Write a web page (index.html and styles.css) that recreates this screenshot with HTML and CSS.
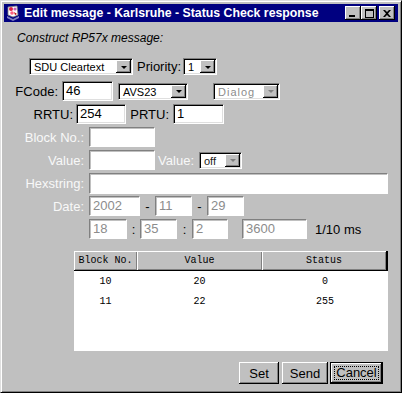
FILE: index.html
```html
<!DOCTYPE html>
<html lang="en">

<head>
    <meta charset="UTF-8">
    <title>Edit message - Karlsruhe - Status Check response</title>
    <link rel="stylesheet" href="styles.css">
</head>

<body>
    <div class="window">
        <div class="titlebar">
            <svg class="app-icon" width="16" height="16" viewBox="0 0 16 16">
                <path d="M2 11 L8 14 L14 11 L14 13 L8 16 L2 13 Z" fill="#8080c0"/>
                <path d="M3 2 L12 1 L13 10 L8 12 L3 10 Z" fill="#ffffff"/>
                <circle cx="6" cy="4" r="2" fill="#e02040"/>
                <circle cx="10" cy="4" r="1.6" fill="#c060c0"/>
                <circle cx="7" cy="8" r="1.8" fill="#ff6080"/>
                <path d="M9 7 L12 9 L10 10 Z" fill="#c00000"/>
                <path d="M3 2 L12 1 L13 10 L8 12 L3 10 Z" fill="none" stroke="#808080" stroke-width="0.8"/>
            </svg>
            <span class="title">Edit message - Karlsruhe - Status Check response</span>
            <div class="title-buttons">
                <span class="tbtn">
                    <svg width="8" height="7" viewBox="0 0 8 7"><rect x="0" y="5" width="6" height="2" fill="#000"/></svg>
                </span>
                <span class="tbtn">
                    <svg width="9" height="9" viewBox="0 0 9 9"><path d="M0 0 H9 V9 H0 Z M1 2 V8 H8 V2 Z" fill="#000" fill-rule="evenodd"/></svg>
                </span>
                <span class="tbtn tbtn-close">
                    <svg width="8" height="7" viewBox="0 0 8 7"><path d="M0 0 H2 L4 2 L6 0 H8 L5 3.5 L8 7 H6 L4 5 L2 7 H0 L3 3.5 Z" fill="#000"/></svg>
                </span>
            </div>
        </div>

        <div class="content">
            <p class="heading">Construct RP57x message:</p>

            <div class="row row-type">
                <div class="combo w-sdu"><span class="combo-text">SDU Cleartext</span><span class="combo-btn"><i class="arrow"></i></span></div>
                <span class="label lbl-priority">Priority:</span>
                <div class="combo w-prio"><span class="combo-text">1</span><span class="combo-btn"><i class="arrow"></i></span></div>
            </div>

            <div class="row row-fcode">
                <span class="label lbl-fcode">FCode:</span>
                <div class="field w-fcode">46</div>
                <div class="combo w-avs"><span class="combo-text">AVS23</span><span class="combo-btn"><i class="arrow"></i></span></div>
                <div class="combo w-dialog disabled"><span class="combo-text">Dialog</span><span class="combo-btn"><i class="arrow"></i></span></div>
            </div>

            <div class="row">
                <span class="label lbl-rrtu">RRTU:</span>
                <div class="field w-rrtu">254</div>
                <span class="label lbl-prtu">PRTU:</span>
                <div class="field w-prtu">1</div>
            </div>

            <div class="row">
                <span class="label lbl-form off">Block No.:</span>
                <div class="field w-block disabled"></div>
            </div>

            <div class="row">
                <span class="label lbl-form off">Value:</span>
                <div class="field w-block disabled"></div>
                <span class="label lbl-value off">Value:</span>
                <div class="combo w-off disabled-btn"><span class="combo-text">off</span><span class="combo-btn"><i class="arrow"></i></span></div>
            </div>

            <div class="row">
                <span class="label lbl-form off">Hexstring:</span>
                <div class="field w-hex disabled"></div>
            </div>

            <div class="row">
                <span class="label lbl-form off">Date:</span>
                <div class="field w-year disabled">2002</div>
                <span class="sep sep-date">-</span>
                <div class="field w-day disabled">11</div>
                <span class="sep sep-date">-</span>
                <div class="field w-day disabled">29</div>
            </div>

            <div class="row">
                <span class="label lbl-form"></span>
                <div class="field w-hour disabled">18</div>
                <span class="sep sep-time1">:</span>
                <div class="field w-day disabled">35</div>
                <span class="sep sep-time2">:</span>
                <div class="field w-sec disabled">2</div>
                <div class="field w-ms disabled">3600</div>
                <span class="label lbl-unit">1/10 ms</span>
            </div>

            <div class="table">
                <div class="thead">
                    <span class="th col-block">Block No.</span>
                    <span class="th col-value">Value</span>
                    <span class="th col-status">Status</span>
                </div>
                <div class="tr">
                    <span class="td col-block">10</span>
                    <span class="td col-value">20</span>
                    <span class="td col-status">0</span>
                </div>
                <div class="tr">
                    <span class="td col-block">11</span>
                    <span class="td col-value">22</span>
                    <span class="td col-status">255</span>
                </div>
            </div>

            <div class="buttons">
                <button class="btn btn-set">Set</button>
                <button class="btn btn-send">Send</button>
                <button class="btn btn-cancel"><span class="focus">Cancel</span></button>
            </div>
        </div>
    </div>
</body>

</html>
```

FILE: styles.css
```css
body {
    margin: 0;
    font-family: "Liberation Sans", Arial, sans-serif;
    font-size: 13px;
    color: #000;
    background: #c0c0c0;
}

.window {
    width: 402px;
    height: 393px;
    box-sizing: border-box;
    background: #c0c0c0;
    border: 1px solid;
    border-color: #dfdfdf #000 #000 #dfdfdf;
    box-shadow: inset 1px 1px #fff, inset -1px -1px #808080;
    padding: 3px;
}

/* title bar */
.titlebar {
    height: 18px;
    background: #000080;
    display: flex;
    align-items: center;
    color: #fff;
}

.app-icon {
    margin-left: 1px;
    flex: none;
}

.title {
    margin-left: 3px;
    font-weight: bold;
    font-size: 12.3px;
    white-space: nowrap;
}

.title-buttons {
    margin-left: auto;
    margin-right: 3px;
    display: flex;
}

.tbtn {
    width: 16px;
    height: 14px;
    box-sizing: border-box;
    background: #c0c0c0;
    box-shadow: inset -1px -1px #000, inset 1px 1px #fff, inset -2px -2px #808080;
    display: flex;
    align-items: center;
    justify-content: center;
    padding-top: 1px;
}

.tbtn-close {
    margin-left: 2px;
}

/* form */
.content {
    display: flex;
    flex-direction: column;
}

.heading {
    margin: 9px 0 0 13px;
    font-size: 12px;
    line-height: 15px;
    font-style: italic;
}

.row {
    display: flex;
    align-items: center;
    height: 20px;
    margin-top: 3px;
}

.row-type {
    height: 17px;
    margin-top: 12px;
    padding-left: 25px;
}

.row-fcode {
    margin-top: 6px;
}

.label {
    white-space: nowrap;
    text-align: right;
    flex: none;
}

.label.off {
    color: #f8f8f8;
}

.lbl-priority { width: 43px; margin: 0 3px 0 4px; }
.lbl-fcode { width: 54px; margin-right: 4px; }
.lbl-rrtu { width: 69px; margin-right: 3px; }
.lbl-prtu { width: 43px; margin-right: 4px; }
.lbl-form { width: 80px; margin-right: 5px; }
.lbl-value { width: 39px; margin-right: 5px; }
.lbl-unit { margin-left: 8px; text-align: left; }

.field {
    height: 20px;
    box-sizing: border-box;
    background: #fff;
    border: 1px solid;
    border-color: #808080 #fff #fff #808080;
    box-shadow: inset 1px 1px #000, inset -1px -1px #dfdfdf;
    padding: 1px 0 0 3px;
    line-height: 16px;
    flex: none;
}

.field.disabled {
    color: #8c8c8c;
    box-shadow: inset 1px 1px #c0c0c0;
}

.w-fcode { width: 51px; }
.w-rrtu { width: 50px; }
.w-prtu { width: 51px; }
.w-block { width: 66px; }
.w-hex { width: 299px; height: 21px; }
.w-year { width: 51px; }
.w-day { width: 37px; }
.w-hour { width: 38px; }
.w-sec { width: 36px; margin-right: 14px; }
.w-ms { width: 65px; }

.sep {
    text-align: center;
    flex: none;
}

.sep-date { width: 15px; }
.sep-time1 { width: 13px; }
.sep-time2 { width: 15px; }

/* combo boxes */
.combo {
    height: 17px;
    box-sizing: border-box;
    background: #fff;
    border: 1px solid;
    border-color: #808080 #fff #fff #808080;
    box-shadow: inset 1px 1px #000, inset -1px -1px #dfdfdf;
    display: flex;
    align-items: stretch;
    padding: 1px;
    font-size: 11px;
    flex: none;
}

.combo-text {
    flex: 1;
    padding-left: 3px;
    line-height: 14px;
    white-space: nowrap;
    overflow: hidden;
}

.combo-btn {
    width: 15px;
    background: #c0c0c0;
    box-shadow: inset -1px -1px #000, inset 1px 1px #fff, inset -2px -2px #808080;
    display: flex;
    align-items: center;
    justify-content: center;
}

.arrow {
    width: 0;
    height: 0;
    border-left: 3px solid transparent;
    border-right: 3px solid transparent;
    border-top: 3px solid #000;
    margin-top: 1px;
}

.combo.disabled .combo-text {
    color: #8c8c8c;
    letter-spacing: 1px;
}

.combo.disabled .arrow,
.combo.disabled-btn .arrow {
    border-top-color: #808080;
}

.combo.disabled-btn .combo-text {
    color: #202020;
}

.w-sdu { width: 104px; }
.w-prio { width: 34px; }
.w-avs { width: 70px; margin-left: 5px; }
.w-dialog { width: 67px; margin-left: 25px; }
.w-off { width: 43px; }

/* table */
.table {
    margin: 12px 0 0 70px;
    width: 314px;
    height: 100px;
    background: #fff;
    font-family: "Liberation Mono", "Courier New", monospace;
    font-size: 10px;
}

.thead {
    display: flex;
    height: 20px;
    background: #c0c0c0;
    border-bottom: 1px solid #000;
    box-sizing: border-box;
}

.th {
    box-sizing: border-box;
    text-align: center;
    line-height: 20px;
    box-shadow: inset 1px 1px #fff, inset -1px -1px #808080;
}

.col-block { width: 63px; }
.col-value { width: 125px; }
.col-status { width: 126px; }

.th.col-status {
    border-right: 2px solid #000;
}

.tr {
    display: flex;
    height: 20px;
}

.td {
    text-align: center;
    line-height: 22px;
}

/* buttons */
.buttons {
    display: flex;
    justify-content: flex-end;
    margin-top: 11px;
    padding-right: 15px;
    gap: 2px;
}

.btn {
    height: 22px;
    box-sizing: border-box;
    background: #c0c0c0;
    border: none;
    font-family: "Liberation Sans", Arial, sans-serif;
    font-size: 13px;
    color: #000;
    padding: 0;
    box-shadow: inset -1px -1px #000, inset 1px 1px #fff, inset -2px -2px #808080;
}

.btn-set { width: 40px; margin-right: 1px; }
.btn-send { width: 46px; }

.btn-cancel {
    width: 53px;
    border: 1px solid #000;
    padding: 3px;
}

.focus {
    display: block;
    height: 100%;
    box-sizing: border-box;
    border: 1px dotted #000;
    line-height: 12px;
}
```
